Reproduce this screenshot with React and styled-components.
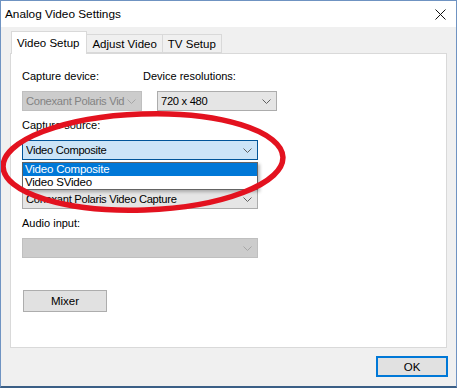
import React from "react";
import styled, { createGlobalStyle } from "styled-components";

const GlobalStyle = createGlobalStyle`
  html, body {
    margin: 0;
    padding: 0;
    background: #ffffff;
  }
  body {
    font-family: "Liberation Sans", Arial, sans-serif;
    font-size: 11px;
    color: #000;
  }
`;

const Window = styled.div`
  position: relative;
  width: 457px;
  height: 388px;
  box-sizing: border-box;
  border: 1px solid #6f93c2;
  border-bottom: 2px solid #3b5f86;
  background: #f0f0f0;
  display: flex;
  flex-direction: column;
  overflow: hidden;
`;

const TitleBar = styled.div`
  height: 26px;
  flex: none;
  background: #ffffff;
  display: flex;
  align-items: center;
  justify-content: space-between;
  padding: 0 10px 0 4px;
`;

const Title = styled.span`
  font-size: 11.8px;
  color: #000;
`;

const CloseIcon = () => (
  <svg width="11" height="11" viewBox="0 0 11 11">
    <path d="M0.5 0.5 L10.5 10.5 M10.5 0.5 L0.5 10.5" stroke="#111" strokeWidth="1" />
  </svg>
);

const Body = styled.div`
  flex: 1;
  display: flex;
  flex-direction: column;
  padding: 4px 9px 0 9px;
`;

const TabStrip = styled.div`
  display: flex;
  align-items: flex-end;
  height: 22px;
  padding-left: 1px;
  position: relative;
  z-index: 1;
`;

const Tab = styled.div`
  box-sizing: border-box;
  height: ${(p) => (p.$active ? "23px" : "19px")};
  margin-bottom: ${(p) => (p.$active ? "-1px" : "0")};
  padding: ${(p) => (p.$active ? "4px 7px 0 5px" : "2px 5px 0 5px")};
  background: ${(p) => (p.$active ? "#ffffff" : "#f0f0f0")};
  border: 1px solid #d9d9d9;
  border-bottom: ${(p) => (p.$active ? "none" : "1px solid #d9d9d9")};
  border-left: ${(p) => (p.$first || p.$active ? "1px solid #d9d9d9" : "none")};
  line-height: 14px;
  font-size: 11.5px;
  white-space: nowrap;
`;

const Panel = styled.div`
  flex: 1;
  background: #ffffff;
  border: 1px solid #d9d9d9;
  padding: 15px 11px 0 11px;
  display: flex;
  flex-direction: column;
  gap: 7px;
`;

const Row = styled.div`
  display: flex;
  gap: 1px;
`;

const Field = styled.div`
  position: relative;
  display: flex;
  flex-direction: column;
  width: ${(p) => p.$width}px;
`;

const Label = styled.div`
  height: 14px;
  line-height: 14px;
  margin-bottom: 8px;
  white-space: nowrap;
`;

const comboColors = {
  disabled: { bg: "#cccccc", border: "#bfbfbf", text: "#838383", arrow: "#a6a6a6" },
  normal: { bg: "#e5e5e5", border: "#acacac", text: "#000000", arrow: "#606060" },
  focused: { bg: "#cce4f7", border: "#005499", text: "#000000", arrow: "#606060" },
};

const ComboBox = styled.div`
  box-sizing: border-box;
  width: ${(p) => p.$width}px;
  height: 20px;
  margin-left: ${(p) => p.$indent || 0}px;
  background: ${(p) => comboColors[p.$variant].bg};
  border: 1px solid ${(p) => comboColors[p.$variant].border};
  color: ${(p) => comboColors[p.$variant].text};
  display: flex;
  align-items: center;
  padding: 0 5px 0 3px;
  gap: 2px;
`;

const ComboText = styled.span`
  flex: 1;
  overflow: hidden;
  white-space: nowrap;
  line-height: 18px;
  font-size: 11.2px;
  letter-spacing: -0.3px;
`;

const Chevron = ({ color }) => (
  <svg width="9" height="5" viewBox="0 0 9 5">
    <path d="M0.5 0.5 L4.5 4.5 L8.5 0.5" stroke={color} strokeWidth="1" fill="none" />
  </svg>
);

const Combo = ({ variant = "normal", width, indent, children }) => (
  <ComboBox $variant={variant} $width={width} $indent={indent}>
    <ComboText>{children}</ComboText>
    <Chevron color={comboColors[variant].arrow} />
  </ComboBox>
);

const DropList = styled.div`
  position: absolute;
  left: 0;
  top: 44px;
  width: 236px;
  box-sizing: border-box;
  background: #ffffff;
  border: 1px solid #646464;
  box-shadow: 2px 2px 3px rgba(0, 0, 0, 0.25);
  z-index: 3;
`;

const DropItem = styled.div`
  height: 13px;
  line-height: 13px;
  padding-left: 2px;
  font-size: 11.5px;
  letter-spacing: -0.2px;
  background: ${(p) => (p.$selected ? "#0078d7" : "#ffffff")};
  color: ${(p) => (p.$selected ? "#ffffff" : "#000000")};
  white-space: nowrap;
`;

const Button = styled.button`
  box-sizing: border-box;
  width: ${(p) => p.$width}px;
  height: ${(p) => p.$height}px;
  font-family: "Liberation Sans", Arial, sans-serif;
  font-size: 11.5px;
  color: #000;
  background: #e1e1e1;
  border: ${(p) => (p.$default ? "2px solid #0078d7" : "1px solid #adadad")};
  padding: 0;
  margin-left: ${(p) => p.$offset || 0}px;
`;

const ButtonRow = styled.div`
  margin-top: 25px;
`;

const Footer = styled.div`
  display: flex;
  justify-content: flex-end;
  padding: 8px 0 9px 0;
  margin-right: -1px;
`;

const Annotation = styled.svg`
  position: absolute;
  left: 0;
  top: 0;
  pointer-events: none;
  z-index: 5;
`;

export default function App() {
  return (
    <>
      <GlobalStyle />
      <Window>
        <TitleBar>
          <Title>Analog Video Settings</Title>
          <CloseIcon />
        </TitleBar>
        <Body>
          <TabStrip>
            <Tab $active $first>Video Setup</Tab>
            <Tab>Adjust Video</Tab>
            <Tab>TV Setup</Tab>
          </TabStrip>
          <Panel>
            <Row>
              <Field $width={120}>
                <Label>Capture device:</Label>
                <Combo variant="disabled" width={120}>Conexant Polaris Vid</Combo>
              </Field>
              <Field $width={140}>
                <Label>Device resolutions:</Label>
                <Combo width={120} indent={14}>720 x 480</Combo>
              </Field>
            </Row>
            <Field $width={236}>
              <Label>Capture source:</Label>
              <Combo variant="focused" width={236}>Video Composite</Combo>
              <DropList>
                <DropItem $selected>Video Composite</DropItem>
                <DropItem>Video SVideo</DropItem>
              </DropList>
            </Field>
            <Field $width={236}>
              <Label />
              <Combo width={236}>Conexant Polaris Video Capture</Combo>
            </Field>
            <Field $width={236}>
              <Label>Audio input:</Label>
              <Combo variant="disabled" width={236}></Combo>
            </Field>
            <ButtonRow>
              <Button $width={84} $height={22} $offset={1}>Mixer</Button>
            </ButtonRow>
          </Panel>
          <Footer>
            <Button $width={72} $height={21} $default>OK</Button>
          </Footer>
        </Body>
        <Annotation width="457" height="388" viewBox="0 0 457 388">
          <ellipse
            cx="142"
            cy="161"
            rx="140"
            ry="48"
            transform="rotate(-2 142 161)"
            fill="none"
            stroke="#e3121f"
            strokeWidth="5.5"
          />
        </Annotation>
      </Window>
    </>
  );
}
